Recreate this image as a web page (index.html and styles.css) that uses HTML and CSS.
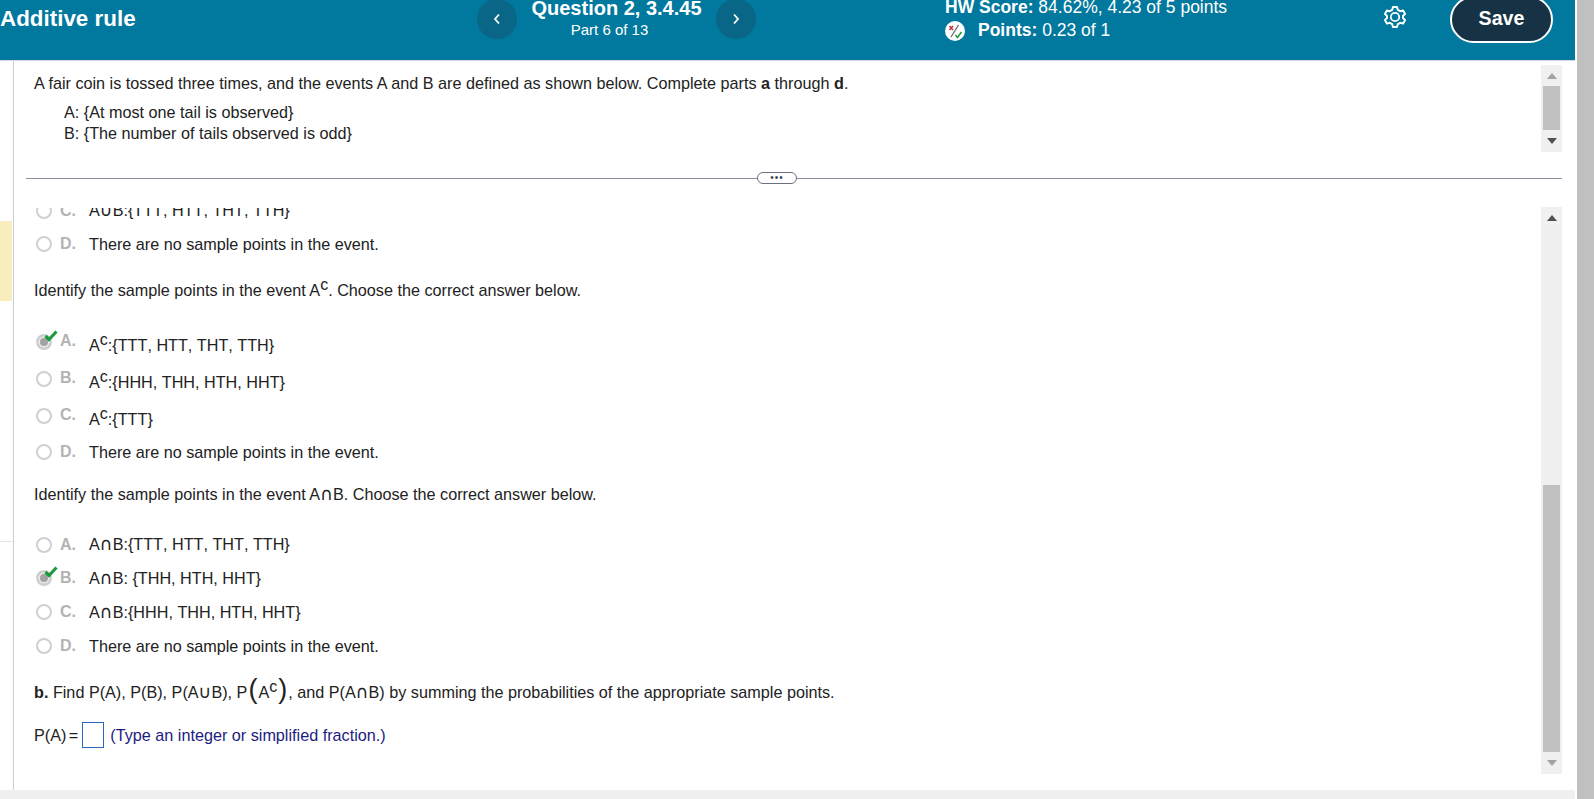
FILE: index.html
```html
<!DOCTYPE html>
<html lang="en">

<head>
    <meta charset="UTF-8">
    <meta name="viewport" content="width=device-width, initial-scale=1.0">
    <title>Additive rule</title>
    <link rel="stylesheet" href="styles.css">
</head>

<body>
    <div class="page">
        <header class="topbar">
            <div class="title">Additive rule</div>
            <button class="nav-btn" type="button">
                <svg width="8" height="12" viewBox="0 0 8 12"><path d="M6 1.500 2 6l4 4.500" fill="none" stroke="#fff" stroke-width="1.800"/></svg>
            </button>
            <div class="question-info">
                <div class="question-name">Question 2, 3.4.45</div>
                <div class="question-part">Part 6 of 13</div>
            </div>
            <button class="nav-btn" type="button">
                <svg width="8" height="12" viewBox="0 0 8 12"><path d="M2 1.500 6 6l-4 4.500" fill="none" stroke="#fff" stroke-width="1.800"/></svg>
            </button>
            <div class="score">
                <div class="score-line"><b>HW Score:</b> 84.62%, 4.23 of 5 points</div>
                <div class="score-line score-points">
                    <svg class="points-icon" width="20" height="20" viewBox="0 0 20 20">
                        <circle cx="10" cy="10" r="10" fill="#fff"/>
                        <path d="M4.500 5 8 9M8 5 4.500 9" stroke="#c8343c" stroke-width="1.500" fill="none"/>
                        <path d="M13.500 4 6 16" stroke="#666" stroke-width="1.300" fill="none"/>
                        <path d="M10.500 14 12.500 16.500 16.500 11" stroke="#1f9a3c" stroke-width="1.600" fill="none"/>
                    </svg>
                    <span><b>Points:</b> 0.23 of 1</span>
                </div>
            </div>
            <svg class="gear" width="22" height="24" viewBox="0 0 22 24">
                <path d="M9 2h4l.8 2.800 2.400 1.400 2.900-.8 2 3.500-2.100 2.100v2l2.100 2.100-2 3.500-2.900-.8-2.400 1.400-.8 2.800H9l-.8-2.800-2.400-1.400-2.900.8-2-3.500L3 13v-2L.9 8.900l2-3.500 2.900.8 2.400-1.400z" fill="none" stroke="#fff" stroke-width="2" stroke-linejoin="round"/>
                <circle cx="11" cy="12" r="4.200" fill="none" stroke="#fff" stroke-width="1.800"/>
            </svg>
            <button class="save-btn" type="button">Save</button>
        </header>

        <div class="main">
            <aside class="side">
                <div class="side-mark"></div>
                <div class="side-line"></div>
            </aside>

            <div class="content">
                <section class="stem">
                    <div class="stem-text">
                        <p class="stem-intro">A fair coin is tossed three times, and the events A and B are defined as shown below. Complete parts <b>a</b> through <b>d</b>.</p>
                        <p class="stem-event">A: {At most one tail is observed}</p>
                        <p class="stem-event">B: {The number of tails observed is odd}</p>
                    </div>
                    <div class="scrollbar scrollbar-stem">
                        <span class="arrow-up arrow-dim"></span>
                        <div class="thumb thumb-stem"></div>
                        <span class="arrow-down"></span>
                    </div>
                </section>

                <div class="divider"><span class="divider-handle">&bull;&bull;&bull;</span></div>

                <section class="work">
                    <div class="work-view">
                        <div class="work-inner">
                            <div class="option option-c"><span class="radio"></span><span class="letter">C.</span><span>A<span class="set-op">&cup;</span>B:{TTT, HTT, THT, TTH}</span></div>
                            <div class="option"><span class="radio"></span><span class="letter">D.</span><span>There are no sample points in the event.</span></div>

                            <p class="prompt prompt-first">Identify the sample points in the event A<sup>c</sup>. Choose the correct answer below.</p>

                            <div class="options-sup">
                                <div class="option option-sup"><span class="radio radio-on"><svg class="check" width="14" height="12" viewBox="0 0 14 12"><path d="M1.500 6 5 9.500 12.500 1.500" fill="none" stroke="#1c9a3e" stroke-width="3.200"/></svg></span><span class="letter letter-top">A.</span><span class="sup-text">A<sup>c</sup>:{TTT, HTT, THT, TTH}</span></div>
                                <div class="option option-sup"><span class="radio"></span><span class="letter letter-top">B.</span><span class="sup-text">A<sup>c</sup>:{HHH, THH, HTH, HHT}</span></div>
                                <div class="option option-sup"><span class="radio"></span><span class="letter letter-top">C.</span><span class="sup-text">A<sup>c</sup>:{TTT}</span></div>
                            </div>
                            <div class="option option-after-sup"><span class="radio"></span><span class="letter">D.</span><span>There are no sample points in the event.</span></div>

                            <p class="prompt prompt-second">Identify the sample points in the event A<span class="set-op">&cap;</span>B. Choose the correct answer below.</p>

                            <div class="options-plain">
                                <div class="option"><span class="radio"></span><span class="letter">A.</span><span>A<span class="set-op">&cap;</span>B:{TTT, HTT, THT, TTH}</span></div>
                                <div class="option"><span class="radio radio-on"><svg class="check" width="14" height="12" viewBox="0 0 14 12"><path d="M1.500 6 5 9.500 12.500 1.500" fill="none" stroke="#1c9a3e" stroke-width="3.200"/></svg></span><span class="letter">B.</span><span>A<span class="set-op">&cap;</span>B: {THH, HTH, HHT}</span></div>
                                <div class="option"><span class="radio"></span><span class="letter">C.</span><span>A<span class="set-op">&cap;</span>B:{HHH, THH, HTH, HHT}</span></div>
                                <div class="option"><span class="radio"></span><span class="letter">D.</span><span>There are no sample points in the event.</span></div>
                            </div>

                            <p class="prompt prompt-b"><b>b.</b> Find P(A), P(B), P(A<span class="set-op">&cup;</span>B), P<span class="paren">(</span>A<sup>c</sup><span class="paren">)</span>, and P(A<span class="set-op">&cap;</span>B) by summing the probabilities of the appropriate sample points.</p>

                            <div class="answer">
                                <span class="answer-label">P(A) =</span>
                                <span class="answer-box"></span>
                                <span class="hint">(Type an integer or simplified fraction.)</span>
                            </div>
                        </div>
                    </div>
                    <div class="scrollbar scrollbar-work">
                        <span class="arrow-up"></span>
                        <div class="thumb thumb-work"></div>
                        <span class="arrow-down arrow-dim"></span>
                    </div>
                </section>
            </div>
        </div>
        <div class="bottom-strip"></div>
    </div>
    <div class="page-scroll"></div>
</body>

</html>
```

FILE: styles.css
```css
html,
body {
    height: 100%;
}

body {
    font-family: "Liberation Sans", Arial, sans-serif;
    font-size: 16.2px;
    color: #222;
    background-color: #fff;
    margin: 0;
    padding: 0;
    overflow: hidden;
    display: flex;
}

p {
    margin: 0;
}

sup {
    font-size: 16px;
    line-height: 0;
    vertical-align: 6px;
}

.set-op {
    font-family: "DejaVu Sans", sans-serif;
    font-size: 17.5px;
    line-height: 0;
}

.page {
    width: 1575px;
    height: 799px;
    display: flex;
    flex-direction: column;
}

.page-scroll {
    width: 17px;
    height: 799px;
    margin-left: 2px;
    background-color: #c0c0c0;
}

/* barra do topo */
.topbar {
    height: 38px;
    padding-bottom: 22px;
    background-color: #01789d;
    border-bottom: 1px solid #d3dce4;
    color: #fff;
    display: flex;
    align-items: center;
    flex-shrink: 0;
}

.title {
    width: 477px;
    font-size: 22.4px;
    font-weight: bold;
}

.nav-btn {
    width: 40px;
    height: 40px;
    padding: 0;
    border: none;
    border-radius: 50%;
    background-color: #0a6686;
    display: flex;
    align-items: center;
    justify-content: center;
    flex-shrink: 0;
}

.question-info {
    width: 199px;
    text-align: center;
}

.question-name {
    font-size: 20px;
    font-weight: bold;
    line-height: 21px;
}

.question-part {
    padding-right: 14px;
    font-size: 15px;
    line-height: 22px;
}

.score {
    width: 439px;
    margin-left: 189px;
    line-height: 23px;
    font-size: 17.5px;
}

.score-points {
    display: flex;
    align-items: center;
}

.points-icon {
    margin-right: 13px;
}

.gear {
    flex-shrink: 0;
    margin-top: -4px;
}

.save-btn {
    width: 103px;
    height: 47px;
    margin-left: 44px;
    padding: 0 0 2px;
    border: 2px solid #fff;
    border-radius: 24px;
    background-color: #163244;
    color: #fff;
    font-family: inherit;
    font-size: 19.6px;
    font-weight: bold;
    flex-shrink: 0;
}

/* corpo */
.main {
    flex: 1;
    display: flex;
    min-height: 0;
}

.side {
    width: 13px;
    padding-top: 160px;
    border-right: 1px solid #c8d0dc;
    flex-shrink: 0;
}

.side-mark {
    width: 12px;
    height: 80px;
    background-color: #f9ecbd;
}

.side-line {
    height: 1px;
    margin-top: 240px;
    background-color: #e4e4e4;
}

.content {
    flex: 1;
    padding: 0 13px 0 12px;
    display: flex;
    flex-direction: column;
    min-width: 0;
}

.stem {
    height: 117px;
    display: flex;
    justify-content: space-between;
    flex-shrink: 0;
}

.stem-text {
    padding: 12px 0 0 8px;
    line-height: 20px;
}

.stem-event {
    margin-left: 30px;
    line-height: 21px;
}

.stem-intro {
    margin-bottom: 9px;
}

.scrollbar {
    width: 21px;
    padding: 0 2px;
    box-sizing: border-box;
    background-color: #f0f0f0;
    display: flex;
    flex-direction: column;
    align-items: center;
}

.scrollbar-stem {
    height: 87px;
    margin-top: 4px;
}

.scrollbar-work {
    height: 567px;
    margin-top: 28px;
}

.thumb {
    width: 17px;
    background-color: #c0c0c0;
}

.thumb-stem {
    height: 44px;
}

.thumb-work {
    height: 268px;
    margin-top: 257px;
}

.arrow-up,
.arrow-down {
    width: 0;
    height: 0;
    border-left: 5px solid transparent;
    border-right: 5px solid transparent;
}

.arrow-up {
    border-bottom: 6px solid #505050;
    margin: 8px 0 7px;
}

.arrow-down {
    border-top: 6px solid #505050;
    margin: 8px 0;
}

.arrow-up.arrow-dim {
    border-bottom-color: #a3a3a3;
}

.arrow-down.arrow-dim {
    border-top-color: #a3a3a3;
}

.divider {
    height: 1px;
    background-color: #8a90a0;
    position: relative;
    flex-shrink: 0;
}

.divider-handle {
    position: absolute;
    left: 731px;
    top: -6px;
    width: 38px;
    height: 10px;
    border: 1px solid #6a7080;
    border-radius: 6px;
    background-color: #fff;
    color: #39465a;
    font-size: 10px;
    line-height: 10px;
    text-align: center;
    letter-spacing: 1px;
}

.work {
    flex: 1;
    display: flex;
    justify-content: space-between;
    min-height: 0;
}

.work-view {
    flex: 1;
    height: 582px;
    margin-top: 29px;
    overflow: hidden;
}

.work-inner {
    margin-top: -14px;
    padding-left: 8px;
}

.option {
    height: 34px;
    padding-left: 2px;
    display: flex;
    align-items: center;
    font-kerning: none;
}

.option-c {
    height: 33px;
}

.option-sup {
    height: 37px;
}

.option-after-sup {
    margin-top: 1px;
}

.options-plain .option:first-child {
    height: 33px;
}

.sup-text {
    margin-top: 8px;
}

.radio {
    width: 12px;
    height: 12px;
    margin-right: 8px;
    border: 2px solid #cfcfcf;
    border-radius: 50%;
    background-color: #fff;
    position: relative;
    flex-shrink: 0;
}

.radio-on {
    background-color: #a2a2a2;
    box-shadow: inset 0 0 0 2px #e8e8e8;
}

.check {
    position: absolute;
    left: 6px;
    top: -6px;
}

.letter {
    width: 29px;
    color: #b3b3b3;
    font-size: 16px;
    font-weight: bold;
    flex-shrink: 0;
}

.letter-top {
    margin-top: -2px;
}

.prompt {
    line-height: 20px;
}

.prompt-first {
    margin-top: 19px;
    margin-bottom: 23px;
}

.prompt-second {
    margin-top: 15px;
    margin-bottom: 24px;
}

.prompt-b {
    margin-top: 19px;
}

.paren {
    font-size: 27px;
    font-weight: normal;
    line-height: 0;
    margin: 0 1px;
}

.answer {
    margin-top: 20px;
    display: flex;
    align-items: center;
}

.answer-label {
    word-spacing: -2px;
}

.answer-box {
    width: 20px;
    height: 24px;
    margin: 0 6px 0 4px;
    border: 1px solid #2a66c0;
}

.hint {
    color: #1c1c80;
}

.bottom-strip {
    height: 9px;
    background-color: #f0f0f0;
    flex-shrink: 0;
}
```
